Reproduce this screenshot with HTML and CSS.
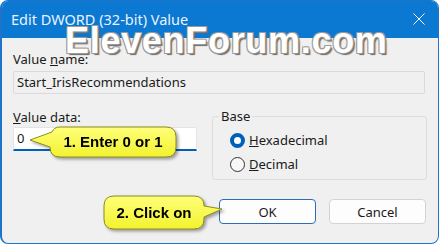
FILE: index.html
```html
<!DOCTYPE html>
<html lang="en">
<head>
  <meta charset="UTF-8" />
  <title>Edit DWORD (32-bit) Value</title>
  <link rel="stylesheet" href="styles.css">
</head>
<body>
  <div class="window">
    <div class="titlebar">
      <span class="title">Edit DWORD (32-bit) Value</span>
      <svg class="close" width="12" height="12" viewBox="0 0 12 12">
        <path d="M0.5 0.5 L11.5 11.5 M11.5 0.5 L0.5 11.5" stroke="#ffffff" stroke-width="1" fill="none" />
      </svg>
    </div>

    <div class="content">
      <div class="label">Value <u>n</u>ame:</div>
      <div class="name-box">Start_IrisRecommendations</div>

      <div class="row">
        <div class="data-col">
          <div class="label"><u>V</u>alue data:</div>
          <div class="data-box">0</div>
        </div>

        <fieldset class="base">
          <legend>Base</legend>
          <label class="radio"><span class="dot checked"></span><span><u>H</u>exadecimal</span></label>
          <label class="radio"><span class="dot"></span><span><u>D</u>ecimal</span></label>
        </fieldset>
      </div>

      <div class="buttons">
        <button class="btn default">OK</button>
        <button class="btn">Cancel</button>
      </div>
    </div>

    <!-- watermark -->
    <div class="watermark">ElevenForum.com</div>

    <!-- callouts -->
    <div class="callout callout-enter">
      <svg width="156" height="42" viewBox="0 0 156 42">
        <defs>
          <linearGradient id="yel1" x1="0" y1="0" x2="0" y2="1">
            <stop offset="0" stop-color="#ffff7a" />
            <stop offset="1" stop-color="#f2f22e" />
          </linearGradient>
        </defs>
        <path d="M34 5 H140 Q150 5 150 15 V25 Q150 35 140 35 H34 Q24 35 24 25 L4 18 L26 10 Q28 5 34 5 Z" fill="url(#yel1)" stroke="#8c8c1e" stroke-width="1" />
      </svg>
      <span class="callout-text">1. Enter 0 or 1</span>
    </div>

    <div class="callout callout-click">
      <svg width="126" height="42" viewBox="0 0 126 42">
        <defs>
          <linearGradient id="yel2" x1="0" y1="0" x2="0" y2="1">
            <stop offset="0" stop-color="#ffff7a" />
            <stop offset="1" stop-color="#f2f22e" />
          </linearGradient>
        </defs>
        <path d="M13 3 H93 Q103 3 103 13 L121 16 L103 24 V26 Q103 36 93 36 H13 Q3 36 3 26 V13 Q3 3 13 3 Z" fill="url(#yel2)" stroke="#8c8c1e" stroke-width="1" />
      </svg>
      <span class="callout-text">2. Click on</span>
    </div>
  </div>
</body>
</html>
```

FILE: styles.css
```css
body {
  margin: 0;
  background: #ffffff;
  font-family: "Noto Sans", "Open Sans", sans-serif;
  font-size: 13px;
  color: #1a1a1a;
}

.window {
  position: relative;
  width: 436px;
  height: 242px;
  border: 1px solid #1f74c9;
  border-left-width: 2px;
  border-radius: 8px;
  overflow: hidden;
  background: #f0f0f0;
}

.titlebar {
  height: 35px;
  background: #0b78d2;
  display: flex;
  align-items: center;
  justify-content: space-between;
  padding: 0 13px 2px 9px;
}

.title {
  color: #eaf3ff;
  font-size: 14.5px;
}

.content {
  padding: 11px 10px 0 11px;
  display: flex;
  flex-direction: column;
}

.label {
  height: 20px;
  line-height: 20px;
}

.name-box {
  margin-top: 2px;
  height: 21px;
  line-height: 21px;
  padding: 0 3px;
  border: 1px solid #dadada;
  border-radius: 2px;
  width: 404px;
}

.row {
  display: flex;
  gap: 15px;
  margin-top: 13px;
}

.data-col {
  width: 184px;
}

.data-box {
  height: 21px;
  line-height: 21px;
  padding: 0 3px;
  background: #ffffff;
  border: 1px solid #e4e4e4;
  border-bottom: 2px solid #0060b8;
  border-radius: 2px 2px 0 0;
}

.base {
  margin: 0;
  padding: 3px 0 0 17px;
  width: 196px;
  height: 68px;
  border: 1px solid #dcdcdc;
  border-radius: 3px;
}

.base legend {
  padding: 0 2px;
  margin-left: -11px;
}

.radio {
  display: flex;
  align-items: center;
  gap: 4px;
  height: 24px;
}

.dot {
  box-sizing: border-box;
  width: 15px;
  height: 15px;
  border-radius: 50%;
  border: 1px solid #333333;
  background: #f7f7f7;
}

.dot.checked {
  border: 4.5px solid #005fb8;
  background: #ffffff;
}

.buttons {
  display: flex;
  justify-content: flex-end;
  gap: 13px;
  margin-top: 19px;
  padding-right: 2px;
}

.btn {
  width: 97px;
  height: 25px;
  font-family: "Noto Sans", "Open Sans", sans-serif;
  font-size: 13px;
  color: #1a1a1a;
  background: #fdfdfd;
  border: 1px solid #d3d3d3;
  border-radius: 4px;
}

.btn.default {
  border-color: #2a6fb4;
}

.watermark {
  position: absolute;
  left: 63px;
  top: 22px;
  font-family: "Liberation Sans", Arial, sans-serif;
  font-weight: bold;
  font-size: 36px;
  line-height: 36px;
  letter-spacing: 0.7px;
  color: #ffffff;
  text-shadow: -1px -1px 0 #9a9a9a, 1px -1px 0 #9a9a9a, -1px 1px 0 #9a9a9a, 1px 1px 0 #8a8a8a, 2px 2px 1px #6a6a6a;
}

.callout {
  position: absolute;
  filter: drop-shadow(2px 2px 1.5px rgba(0, 0, 0, 0.35));
}

.callout svg {
  display: block;
}

.callout-text {
  position: absolute;
  top: 4px;
  height: 31px;
  display: flex;
  align-items: center;
  justify-content: center;
  font-family: "Liberation Sans", Arial, sans-serif;
  font-weight: bold;
  font-size: 15px;
  color: #000000;
}

.callout-enter {
  left: 24px;
  top: 121px;
}

.callout-enter .callout-text {
  left: 24px;
  width: 126px;
}

.callout-click {
  left: 99px;
  top: 192px;
}

.callout-click .callout-text {
  top: 3px;
  height: 33px;
  left: 3px;
  width: 100px;
}
```
